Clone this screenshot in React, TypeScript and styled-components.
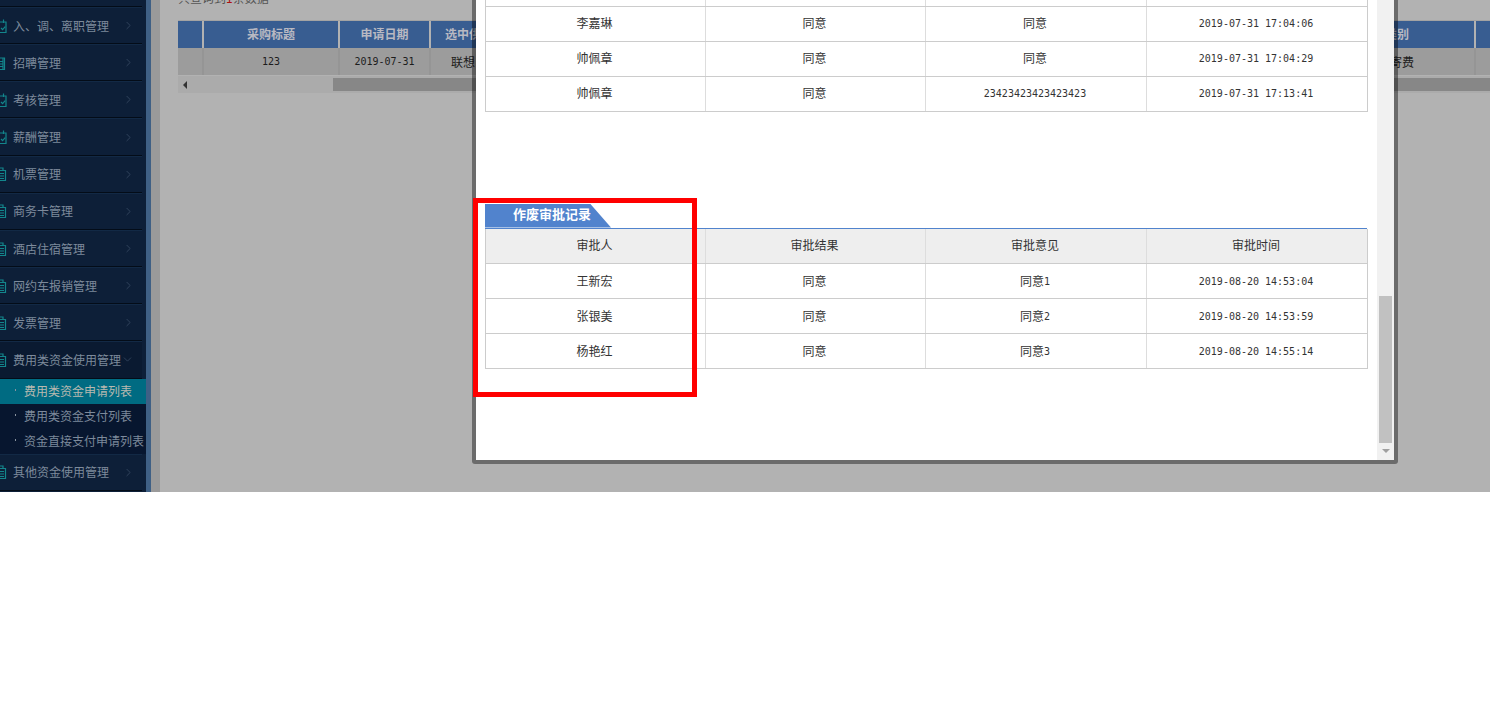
import styled, { createGlobalStyle } from "styled-components";
import { ChevronDown, ChevronRight } from "lucide-react";

const cjk = `"Noto Sans CJK SC", "Liberation Sans", sans-serif`;

const GlobalStyle = createGlobalStyle`
  html, body { margin: 0; padding: 0; background: #fff; }
  body { font-family: ${cjk}; font-size: 12px; }
  * { box-sizing: border-box; }
`;

type IconKind = "calendar" | "board" | "clip";

const menuItems: { label: string; icon: IconKind }[] = [
  { label: "入、调、离职管理", icon: "calendar" },
  { label: "招聘管理", icon: "board" },
  { label: "考核管理", icon: "calendar" },
  { label: "薪酬管理", icon: "calendar" },
  { label: "机票管理", icon: "clip" },
  { label: "商务卡管理", icon: "clip" },
  { label: "酒店住宿管理", icon: "clip" },
  { label: "网约车报销管理", icon: "clip" },
  { label: "发票管理", icon: "clip" },
];
const subItems = ["费用类资金申请列表", "费用类资金支付列表", "资金直接支付申请列表"];

const upperRows = [
  ["李嘉琳", "同意", "同意", "2019-07-31 17:04:06"],
  ["帅佩章", "同意", "同意", "2019-07-31 17:04:29"],
  ["帅佩章", "同意", "23423423423423423", "2019-07-31 17:13:41"],
];
const lowerRows = [
  ["王新宏", "同意", "同意1", "2019-08-20 14:53:04"],
  ["张银美", "同意", "同意2", "2019-08-20 14:53:59"],
  ["杨艳红", "同意", "同意3", "2019-08-20 14:55:14"],
];

function MenuIcon({ kind }: { kind: IconKind }) {
  return (
    <IconBox viewBox="0 0 14 14" width="14" height="14" fill="none" stroke="#13868c" strokeWidth="1.2">
      {kind === "calendar" && (
        <>
          <path d="M1 3h12v10.5H1z" />
          <path d="M10.5 0.5v3.5" />
          <path d="M8 9l1.6 1.6 2.6-3" />
        </>
      )}
      {kind === "board" && (
        <>
          <path d="M1 2h10.5v11.5H1z" />
          <path d="M10 2v11.5" />
          <path d="M7 5.5h3M7 8h3M7 10.5h3" />
        </>
      )}
      {kind === "clip" && (
        <>
          <path d="M6 3.5V1h4v2.5" />
          <path d="M1 3.5h11.5v10H1z" />
          <path d="M7 6.5h4M7 9h4M7 11.5h4" />
        </>
      )}
    </IconBox>
  );
}

function MenuRow({ label, icon, open }: { label: string; icon: IconKind; open?: boolean }) {
  return (
    <Row $open={open}>
      <MenuIcon kind={icon} />
      <RowLabel>{label}</RowLabel>
      <RowArrow $open={open}>
        {open ? <ChevronDown size={13} strokeWidth={1.4} /> : <ChevronRight size={13} strokeWidth={1.4} />}
      </RowArrow>
    </Row>
  );
}

// digits in the reference are half-width, 6px per char
function CellText({ text }: { text: string }) {
  const parts = text.match(/[0-9:\- ]+|[^0-9:\- ]+/g) ?? [];
  return (
    <>
      {parts.map((p, i) => (/[0-9]/.test(p) ? <Num key={i}>{p}</Num> : <span key={i}>{p}</span>))}
    </>
  );
}

function RecordTable({ rows, header }: { rows: string[][]; header?: boolean }) {
  return (
    <Table>
      <colgroup>
        <col width="220" />
        <col width="220" />
        <col width="221" />
        <col width="221" />
      </colgroup>
      <tbody>
        {header ? (
          <tr>
            <HeadCell>审批人</HeadCell>
            <HeadCell>审批结果</HeadCell>
            <HeadCell>审批意见</HeadCell>
            <HeadCell>审批时间</HeadCell>
          </tr>
        ) : (
          <StubRow>
            <td />
            <td />
            <td />
            <td />
          </StubRow>
        )}
        {rows.map((r, i) => (
          <tr key={i}>
            {r.map((c, j) => (
              <Cell key={j}>
                <CellText text={c} />
              </Cell>
            ))}
          </tr>
        ))}
      </tbody>
    </Table>
  );
}

export default function App() {
  return (
    <>
      <GlobalStyle />
      <Stage>
        <Sidebar>
          <TopStub />
          {menuItems.map((m) => (
            <MenuRow key={m.label} label={m.label} icon={m.icon} />
          ))}
          <MenuRow label="费用类资金使用管理" icon="clip" open />
          <SubList>
            {subItems.map((s, i) => (
              <SubItem key={s} $active={i === 0}>
                <SubDot />
                {s}
              </SubItem>
            ))}
          </SubList>
          <MenuRow label="其他资金使用管理" icon="clip" />
        </Sidebar>
        <Main>
          <Caption>
            共查询到<Red>1</Red>条数据
          </Caption>
          <GridHead>
            <HeadCol $w={24} />
            <HeadCol $w={134}>采购标题</HeadCol>
            <HeadCol $w={89}>申请日期</HeadCol>
            <HeadCol $w={88}>选中供应商</HeadCol>
            <HeadCol $grow />
            <HeadCol $w={148} $padRight={6}>
              类别
            </HeadCol>
            <HeadCol $w={14} />
          </GridHead>
          <GridRow>
            <BodyCol $w={24} />
            <BodyCol $w={134}>
              <Num>123</Num>
            </BodyCol>
            <BodyCol $w={89}>
              <Num>2019-07-31</Num>
            </BodyCol>
            <BodyCol $w={88}>联想电脑</BodyCol>
            <BodyCol $grow />
            <BodyCol $w={148} $padLeft={4}>
              寄费
            </BodyCol>
            <BodyCol $w={14} />
          </GridRow>
          <HScroll>
            <HArrow />
            <HThumb />
          </HScroll>
        </Main>

        <Modal>
          <ModalBody>
            <RecordTable rows={upperRows} />
            <SectionTitle>
              <SectionTab>作废审批记录</SectionTab>
            </SectionTitle>
            <RecordTable rows={lowerRows} header />
          </ModalBody>
          <VScroll>
            <VThumb />
            <VArrow />
          </VScroll>
        </Modal>

        <Highlight />
      </Stage>
    </>
  );
}

const Stage = styled.div`
  position: relative;
  display: flex;
  height: 492px;
  overflow: hidden;
  background: #b2b2b2;
`;

const Sidebar = styled.div`
  width: 151px;
  flex: none;
  background: #0d1f38;
  border-right: 5px solid #3f6085;
  overflow: hidden;
`;

const TopStub = styled.div`
  width: 142px;
  height: 7px;
  border-bottom: 1px solid #030c18;
`;

const Row = styled.div<{ $open?: boolean }>`
  display: flex;
  align-items: center;
  width: 142px;
  height: 37.17px;
  border-top: 1px solid #122945;
  border-bottom: 1px solid #030c18;
  background: ${(p) => (p.$open ? "#0a1a31" : "transparent")};
  color: #7d8a9b;
  overflow: hidden;
`;

const IconBox = styled.svg`
  flex: none;
  margin-left: -7px;
  margin-right: 6px;
`;

const RowLabel = styled.span`
  white-space: nowrap;
  line-height: 16px;
`;

const RowArrow = styled.span<{ $open?: boolean }>`
  display: flex;
  margin-left: auto;
  margin-right: ${(p) => (p.$open ? "8px" : "7px")};
  color: #3a4d66;
`;

const SubList = styled.div`
  width: 146px;
  background: #07162f;
  height: 75px;
`;

const SubItem = styled.div<{ $active?: boolean }>`
  display: flex;
  align-items: center;
  height: 25px;
  padding-bottom: 2px;
  white-space: nowrap;
  background: ${(p) => (p.$active ? "#006b82" : "transparent")};
  color: ${(p) => (p.$active ? "#b8b9b0" : "#7d8a9b")};
`;

const SubDot = styled.span`
  flex: none;
  width: 1px;
  height: 2px;
  margin-left: 15px;
  margin-right: 8px;
  background: #8a94a0;
`;

const Main = styled.div`
  flex: 1;
  min-width: 0;
  border-left: 9px solid #9a9a9a;
  padding-left: 18px;
  overflow: hidden;
`;

const Caption = styled.div`
  height: 20px;
  margin-top: -9px;
  margin-bottom: 9px;
  line-height: 14px;
  color: #555;
`;

const Red = styled.span`
  color: #b01010;
`;

const GridHead = styled.div`
  display: flex;
  gap: 2px;
  height: 28px;
  border-top: 1px solid #a3a3a3;
`;

const HeadCol = styled.div<{ $w?: number; $grow?: boolean; $padRight?: number }>`
  flex: ${(p) => (p.$grow ? "1" : `0 0 ${p.$w}px`)};
  padding: 0 ${(p) => p.$padRight ?? 0}px 2px 0;
  background: #385d91;
  color: #b9b9c2;
  font-weight: 700;
  font-size: 12px;
  display: flex;
  align-items: center;
  justify-content: center;
  white-space: nowrap;
  overflow: hidden;
`;

const GridRow = styled.div`
  display: flex;
  gap: 2px;
  height: 27px;
  background: #959595;
`;

const BodyCol = styled.div<{ $w?: number; $grow?: boolean; $padLeft?: number }>`
  flex: ${(p) => (p.$grow ? "1" : `0 0 ${p.$w}px`)};
  padding-left: ${(p) => p.$padLeft ?? 0}px;
  padding-bottom: 1px;
  background: #9c9c9c;
  color: #1c1c1c;
  display: flex;
  align-items: center;
  justify-content: center;
  white-space: nowrap;
  overflow: hidden;
`;

const HScroll = styled.div`
  display: flex;
  align-items: center;
  height: 17px;
  margin-top: 1px;
  background: #ababab;
  padding-left: 5px;
`;

const HArrow = styled.div`
  border-style: solid;
  border-width: 4px 4px 4px 0;
  border-color: transparent #333 transparent transparent;
`;

const HThumb = styled.div`
  margin-left: 146px;
  flex: 1;
  height: 13px;
  background: #878787;
`;

const Num = styled.span`
  font-family: "DejaVu Sans Mono", monospace;
  font-size: 10px;
  white-space: pre;
  vertical-align: 1px;
`;

const Modal = styled.div`
  position: absolute;
  left: 472px;
  top: 0;
  width: 926px;
  height: 464px;
  display: flex;
  background: #fff;
  background-clip: padding-box;
  border: 4px solid rgba(0, 0, 0, 0.4);
  border-top: none;
  border-radius: 0 0 3px 3px;
  overflow: hidden;
`;

const ModalBody = styled.div`
  flex: 1;
  min-width: 0;
  padding-left: 9px;
  padding-right: 9px;
`;

const Table = styled.table`
  width: 882px;
  table-layout: fixed;
  border-collapse: collapse;
  color: #333;
  font-size: 12px;
`;

const StubRow = styled.tr`
  height: 6px;
  td {
    padding: 0;
    border: 1px solid #ccc;
    border-top: none;
    border-right-color: #ddd;
  }
  td:last-child {
    border-right-color: #ccc;
  }
`;

const Cell = styled.td`
  height: 35px;
  padding: 0 2px 2px 0;
  text-align: center;
  border: 1px solid #ccc;
  border-left-color: #ddd;
  border-right-color: #ddd;
  &:first-child {
    border-left-color: #ccc;
  }
  &:last-child {
    border-right-color: #ccc;
  }
`;

const HeadCell = styled(Cell)`
  background: #eee;
  border-top: none;
`;

const SectionTitle = styled.div`
  margin-top: 92px;
  width: 882px;
  height: 25px;
  border-bottom: 1px solid #5183cd;
`;

const SectionTab = styled.div`
  width: 126px;
  height: 24px;
  padding-left: 28px;
  line-height: 20px;
  background: #5183cd;
  color: #fff;
  font-size: 13px;
  font-weight: 700;
  white-space: nowrap;
  clip-path: polygon(0 0, 105px 0, 100% 100%, 0 100%);
`;

const VScroll = styled.div`
  position: relative;
  flex: none;
  width: 17px;
  background: #f1f1f1;
`;

const VThumb = styled.div`
  position: absolute;
  left: 2px;
  top: 296px;
  width: 13px;
  height: 147px;
  background: #c1c1c1;
`;

const VArrow = styled.div`
  position: absolute;
  left: 5px;
  top: 449px;
  border-style: solid;
  border-width: 4px 4px 0 4px;
  border-color: #a0a0a0 transparent transparent transparent;
`;

const Highlight = styled.div`
  position: absolute;
  left: 473px;
  top: 198px;
  width: 224px;
  height: 199px;
  border: 5px solid #ff0000;
`;
